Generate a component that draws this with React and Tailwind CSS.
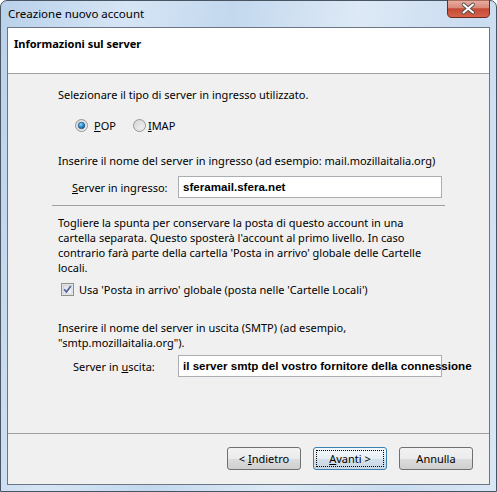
import React from "react";

const UI = { fontFamily: '"Noto Sans", "Open Sans", sans-serif' };
const BOLD = { fontFamily: '"Liberation Sans", Arial, sans-serif' };

function Radio({ checked }) {
  return (
    <svg width="13" height="13" viewBox="0 0 13 13" className="shrink-0 block">
      <defs>
        <linearGradient id={checked ? "rbg1" : "rbg0"} x1="0" y1="0" x2="1" y2="1">
          <stop offset="0" stopColor="#cfcfcf" />
          <stop offset="1" stopColor="#fbfbfb" />
        </linearGradient>
        <radialGradient id="rdot" cx="0.4" cy="0.35" r="0.75">
          <stop offset="0" stopColor="#8fdcff" />
          <stop offset="0.5" stopColor="#2a8ad0" />
          <stop offset="1" stopColor="#143f78" />
        </radialGradient>
      </defs>
      <circle cx="6.5" cy="6.5" r="6" fill={checked ? "url(#rbg1)" : "url(#rbg0)"} stroke="#959595" />
      <circle cx="6.5" cy="6.5" r="4.5" fill="none" stroke="#e0e0e0" strokeWidth="1" />
      {checked && <circle cx="6.5" cy="6.5" r="3.3" fill="url(#rdot)" stroke="#244f82" strokeWidth="0.6" />}
    </svg>
  );
}

function Checkbox() {
  return (
    <svg width="13" height="13" viewBox="0 0 13 13" className="shrink-0 block">
      <defs>
        <linearGradient id="cbg" x1="0" y1="0" x2="1" y2="1">
          <stop offset="0" stopColor="#dcdcdc" />
          <stop offset="1" stopColor="#fafafa" />
        </linearGradient>
      </defs>
      <rect x="0.5" y="0.5" width="12" height="12" fill="#f6f6f6" stroke="#8e8f8f" />
      <rect x="2" y="2" width="9" height="9" fill="url(#cbg)" stroke="#b8b8b8" strokeWidth="0.6" />
      <path d="M3.2 6.3 L5.4 9 L9.8 3" fill="none" stroke="#4a62a6" strokeWidth="1.7" strokeLinejoin="round" />
    </svg>
  );
}

function CloseButton() {
  return (
    <svg width="43" height="18" viewBox="0 0 43 18" className="block">
      <defs>
        <linearGradient id="clg" x1="0" y1="0" x2="0" y2="1">
          <stop offset="0" stopColor="#eab1a6" />
          <stop offset="0.45" stopColor="#d88878" />
          <stop offset="0.5" stopColor="#c34a35" />
          <stop offset="1" stopColor="#d9644c" />
        </linearGradient>
      </defs>
      <path d="M0.5 0 V13 Q0.5 17.5 5 17.5 H38 Q42.5 17.5 42.5 13 V0 Z" fill="url(#clg)" stroke="#6e2a1f" />
      <path d="M16.5 4.5 L26 12.5 M26 4.5 L16.5 12.5" stroke="#4a4a4a" strokeWidth="3.6" strokeLinecap="round" />
      <path d="M16.5 4.5 L26 12.5 M26 4.5 L16.5 12.5" stroke="#ffffff" strokeWidth="2" strokeLinecap="round" />
    </svg>
  );
}

function Button({ children, def }) {
  return (
    <div
      className={
        "relative w-[74px] h-[23px] rounded-[3px] border flex items-center justify-center text-black " +
        (def
          ? "border-[#3c7fb1] bg-[linear-gradient(to_bottom,#f4f8fb_0%,#e6eef4_50%,#d5e2ec_50%,#c8d7e3_100%)]"
          : "border-[#707070] bg-[linear-gradient(to_bottom,#f2f2f2_0%,#ebebeb_50%,#dddddd_50%,#cfcfcf_100%)]")
      }
    >
      {def && <div className="absolute inset-[2px] border border-dotted border-black" />}
      <span className="relative leading-[15px]">{children}</span>
    </div>
  );
}

export default function App() {
  return (
    <div className="w-[497px] h-[492px] bg-white text-[11px] text-black" style={UI}>
      <div className="relative w-[497px] h-[492px] flex flex-col rounded-t-[7px] border border-[#4a5564] px-[6px] pb-[6px] bg-[linear-gradient(100deg,#b9d1ea_0%,#d6e5f5_22%,#c3d8ee_40%,#dde9f6_62%,#cadcf0_82%,#d9e7f5_100%)]">
        <div className="h-[26px] flex items-center pl-[1px] pb-[1px]">
          <span className="leading-[15px] text-[11.5px]">Creazione nuovo account</span>
        </div>
        <div className="absolute top-[-1px] right-[6px]">
          <CloseButton />
        </div>

        <div className="flex-1 flex flex-col border border-[#6c7683] bg-[#f0f0f0]">
          <div className="h-[46px] shrink-0 bg-white border-b border-[#a0a0a0] pl-[6px] pt-[8px]">
            <div className="font-bold leading-[15px]">Informazioni sul server</div>
          </div>

          <div className="flex-1 flex flex-col pl-[50px]">
            <p className="mt-[13px] leading-[15px]">Selezionare il tipo di server in ingresso utilizzato.</p>

            <div className="mt-[16px] h-[15px] flex items-center pl-[17px]">
              <Radio checked />
              <span className="ml-[6px] leading-[15px]"><u>P</u>OP</span>
              <span className="ml-[17px]"><Radio /></span>
              <span className="ml-[2px] leading-[15px]"><u>I</u>MAP</span>
            </div>

            <p className="mt-[20px] leading-[15px]">Inserire il nome del server in ingresso (ad esempio: mail.mozillaitalia.org)</p>

            <div className="mt-[8px] flex items-center pl-[14px]">
              <span className="w-[106px] leading-[15px]"><u>S</u>erver in ingresso:</span>
              <div className="w-[264px] h-[22px] border border-[#abadb3] bg-white flex items-center pl-[4px] font-bold text-[11.6px]" style={BOLD}>
                sferamail.sfera.net
              </div>
            </div>

            <div className="mt-[7px] ml-[-6px] w-[393px] h-px bg-[#a0a0a0]" />

            <p className="mt-[9px] leading-[15px]">
              Togliere la spunta per conservare la posta di questo account in una
              <br />
              cartella separata. Questo sposterà l'account al primo livello. In caso
              <br />
              contrario farà parte della cartella 'Posta in arrivo' globale delle Cartelle
              <br />
              locali.
            </p>

            <div className="mt-[7px] h-[15px] flex items-center pl-[3px]">
              <Checkbox />
              <span className="ml-[5px] leading-[15px]">Usa 'Posta in arrivo' globale (posta nelle 'Cartelle Locali')</span>
            </div>

            <p className="mt-[23px] leading-[15px]">
              Inserire il nome del server in uscita (SMTP) (ad esempio,
              <br />
              "smtp.mozillaitalia.org").
            </p>

            <div className="mt-[5px] flex items-center pl-[15px]">
              <span className="w-[105px] leading-[15px]">Server in <u>u</u>scita:</span>
              <div className="w-[264px] h-[22px] border border-[#abadb3] bg-white flex items-center pl-[4px] font-bold text-[11.6px] whitespace-nowrap overflow-visible" style={BOLD}>
                il server smtp del vostro fornitore della connessione
              </div>
            </div>
          </div>

          <div className="h-px bg-[#a0a0a0] shrink-0" />
          <div className="h-[50px] shrink-0 flex justify-end gap-[12px] pr-[16px] pt-[13px]">
            <Button>&lt; <u>I</u>ndietro</Button>
            <Button def><u>A</u>vanti &gt;</Button>
            <Button>Annulla</Button>
          </div>
        </div>
      </div>
    </div>
  );
}
